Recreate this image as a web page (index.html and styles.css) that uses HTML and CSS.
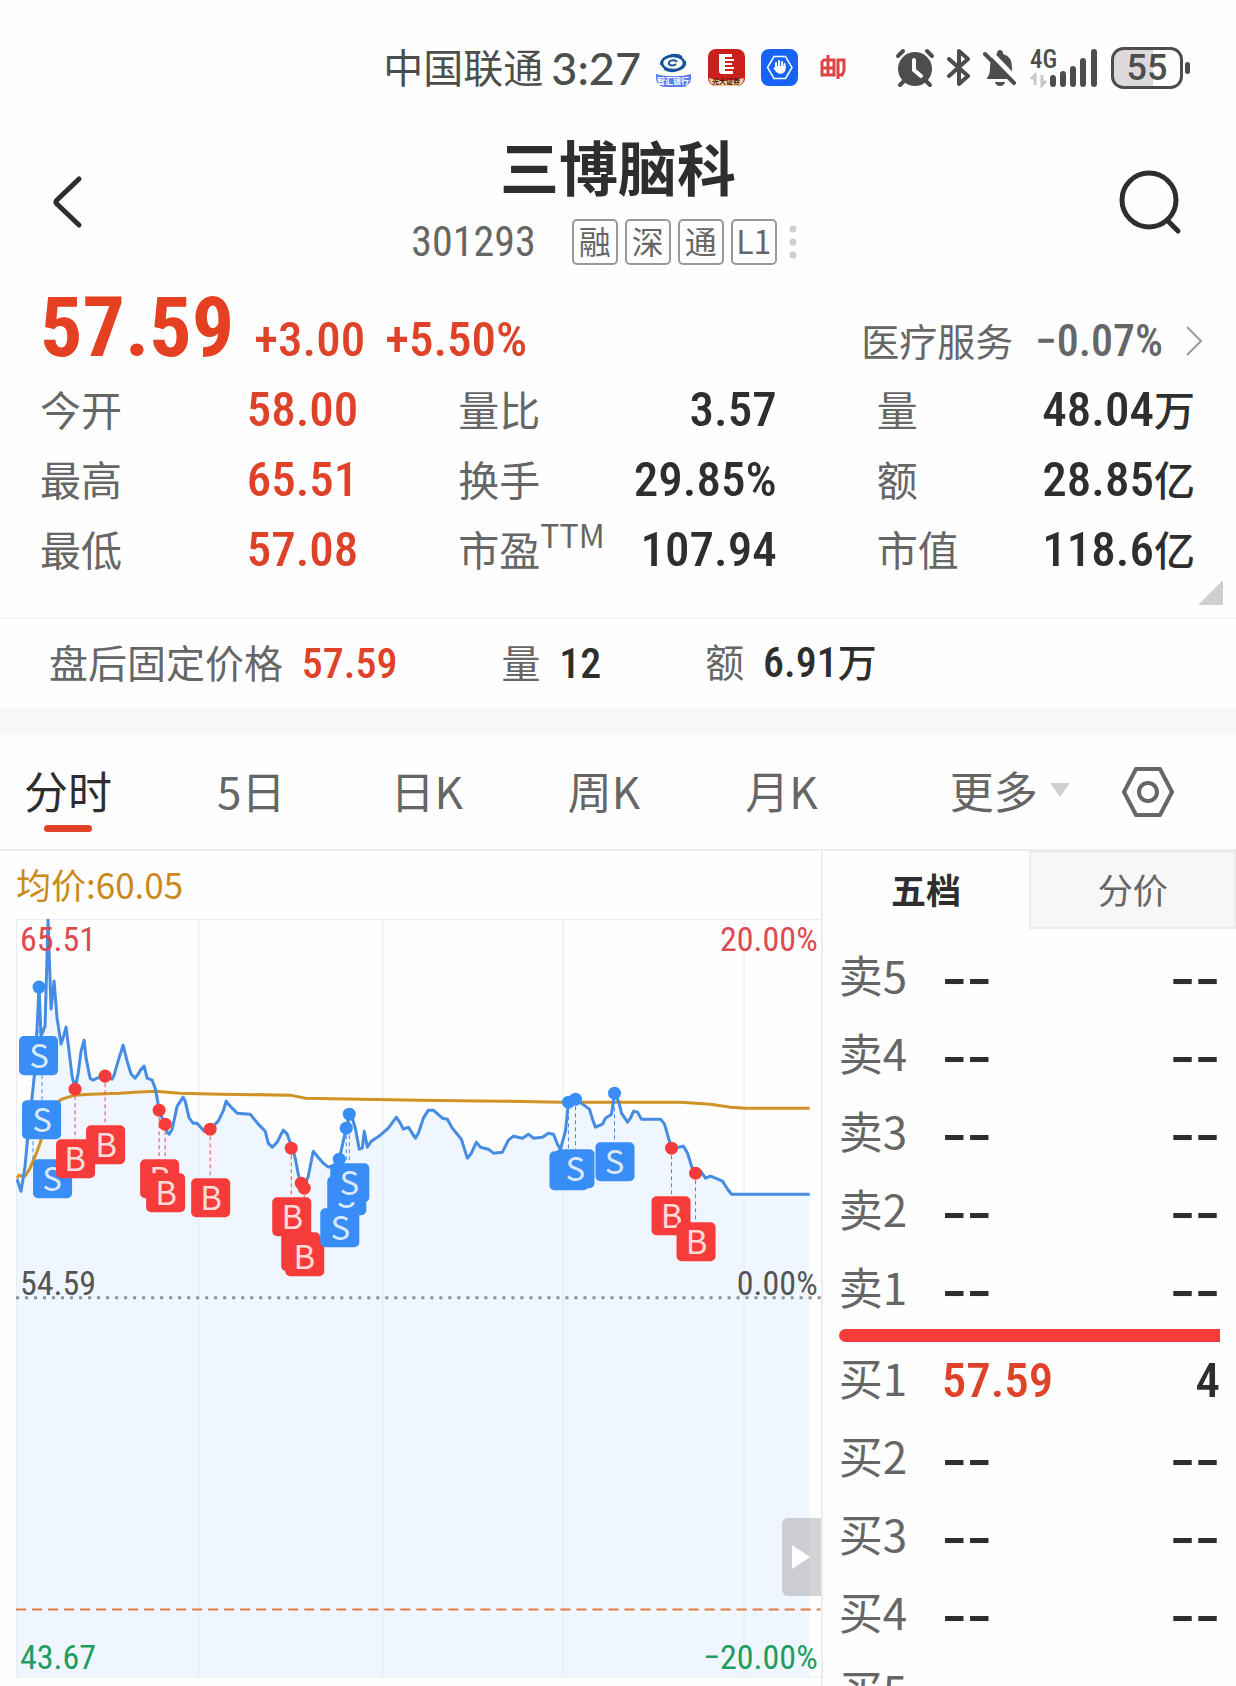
FILE: index.html
```html
<!DOCTYPE html>
<html lang="zh-CN">
<head>
<meta charset="utf-8">
<meta name="viewport" content="width=device-width, initial-scale=1">
<title>三博脑科 301293</title>
<link rel="stylesheet" href="styles.css">
</head>
<body>
<div class="app">
  <div class="status">
    <span class="carrier">中国联通</span>
    <span class="clock">3:27</span>
    <div class="notices">
      <svg width="37" height="38" viewBox="0 0 37 38">
        <ellipse cx="18" cy="14" rx="11" ry="7" fill="none" stroke="#15539c" stroke-width="2.500"/>
        <path d="M6 16C5 8 20 3 27 8M30 12C32 20 18 25 9 20" fill="none" stroke="#15539c" stroke-width="2"/>
        <path d="M22 13c-2-3-9-2-8 2c1 2 5 2 7 0" fill="none" stroke="#15539c" stroke-width="2"/>
        <path d="M1 25c9 3 25 3 35 0c1 8-3 13-9 13H10c-6 0-10-5-9-13z" fill="#5b7cf0"/>
        <text x="18" y="35" class="logo-text" fill="#fff">智汇银行</text>
      </svg>
      <svg width="37" height="38" viewBox="0 0 37 38">
        <rect width="37" height="37" rx="8" fill="#c9201c"/>
        <path d="M1 29q17 5 35 0q-1 8-8 8H9q-7 0-8-8z" fill="#f3cf9a"/>
        <path d="M11 5h13v3h-7v2h9v2h-9v2h7v2h-7v2h9v2h-9v2h8v3H14q-3 0-3-3z" fill="#fff"/>
        <text x="18" y="35" class="logo-text small" fill="#4a1a10">光大证券</text>
      </svg>
      <svg width="37" height="38" viewBox="0 0 37 38">
        <rect width="37" height="37" rx="8" fill="#1763f6"/>
        <path d="M13 7.500h11.500L31 18.500L24.500 29.500H13L6.500 18.500z" fill="none" stroke="#fff" stroke-width="1.500"/>
        <path d="M15 19v-5M18 18v-6M21 18v-5M23.500 19v-4" stroke="#fff" stroke-width="2" stroke-linecap="round"/>
        <path d="M14 17h10.500v3q0 4-5 5q-3 0-5-3l-2-2.500q0-1.500 2-.5z" fill="#fff"/>
      </svg>
      <svg class="mail-logo" width="26" height="38" viewBox="0 0 26 38" fill="none" stroke="#df4444" stroke-width="3">
        <path d="M8 6v20M4 11h10v15H2V13zM2 19h12M18 30V11h6v11l-2 4h-3"/>
      </svg>
    </div>
    <div class="signals">
      <svg width="40" height="40" viewBox="0 0 40 40">
        <circle cx="20" cy="21" r="17" fill="#4c4e4b"/>
        <path d="M3 8l5-5M32 3l5 5M5 37l5-5M30 32l5 5" stroke="#4c4e4b" stroke-width="4" stroke-linecap="round"/>
        <path d="M19 12v10l7 6" fill="none" stroke="#fff" stroke-width="4" stroke-linecap="round"/>
      </svg>
      <svg width="24" height="40" viewBox="0 0 24 40">
        <path d="M2 11l19 17l-9 8V3l9 8L2 28" fill="none" stroke="#4c4e4b" stroke-width="4" stroke-linejoin="round" stroke-linecap="round"/>
      </svg>
      <svg width="34" height="40" viewBox="0 0 34 40">
        <path d="M4 31V30q3-3 3-10q0-12 7-14q0-4 3-4t3 4q9 2 9 14q0 8 3 11z" fill="#4c4e4b"/>
        <path d="M12 34h10q-1 4-5 4t-5-4z" fill="#4c4e4b"/>
        <path d="M5 2l28 29" stroke="#fff" stroke-width="5"/>
        <path d="M2 6l29 29" stroke="#4c4e4b" stroke-width="4" stroke-linecap="round"/>
      </svg>
      <svg width="70" height="40" viewBox="0 0 70 40">
        <text x="1" y="20" class="net">4G</text>
        <path d="M2 31l4-4v10M17 33l-4 4V27" fill="none" stroke="#c8c8c8" stroke-width="3"/>
        <path d="M24 30v6M34 26v10M44 21v15M54 13v23M65 4v32" stroke="#4c4e4b" stroke-width="6" stroke-linecap="round"/>
      </svg>
      <svg width="80" height="42" viewBox="0 0 80 42">
        <path d="M12 2h30v38H12Q2 40 2 30V12Q2 2 12 2z" fill="#dcd8dc"/>
        <rect x="1.500" y="1.500" width="69" height="39" rx="11" fill="none" stroke="#4c4e4b" stroke-width="3"/>
        <rect x="74" y="15" width="5" height="12" rx="2.500" fill="#4c4e4b"/>
        <text x="36" y="33" class="battery">55</text>
      </svg>
    </div>
  </div>

  <header class="header">
    <button class="icon-btn" aria-label="返回">
      <svg width="34" height="54" viewBox="0 0 34 54"><path d="M29 4L7 25q-2 2 0 4L29 50" fill="none" stroke="#2e2e2e" stroke-width="5" stroke-linecap="round"/></svg>
    </button>
    <div class="heading">
      <h1>三博脑科</h1>
      <div class="code-row">
        <span class="code">301293</span>
        <div class="badges">
          <span class="badge">融</span><span class="badge">深</span><span class="badge">通</span><span class="badge">L1</span>
        </div>
        <svg width="8" height="36" viewBox="0 0 8 36" fill="#cfcfcf"><circle cx="4" cy="5" r="3.500"/><circle cx="4" cy="18" r="3.500"/><circle cx="4" cy="31" r="3.500"/></svg>
      </div>
    </div>
    <button class="icon-btn" aria-label="搜索">
      <svg width="64" height="66" viewBox="0 0 64 66" fill="none" stroke="#2e2e2e" stroke-width="5" stroke-linecap="round"><circle cx="31" cy="31" r="27"/><path d="M50 52l10 10"/></svg>
    </button>
  </header>

  <section class="price-row">
    <strong class="price">57.59</strong>
    <span class="change">+3.00</span>
    <span class="change">+5.50%</span>
    <a class="sector" href="#sector">
      <span>医疗服务</span>
      <span class="sector-num">−0.07%</span>
      <svg width="18" height="30" viewBox="0 0 18 30"><path d="M2 1l14 14L2 29" fill="none" stroke="#999" stroke-width="2"/></svg>
    </a>
  </section>

  <section class="quote">
    <dl class="stats">
      <div class="stat up"><dt>今开</dt><dd>58.00</dd></div>
      <div class="stat"><dt>量比</dt><dd>3.57</dd></div>
      <div class="stat"><dt>量</dt><dd>48.04<span class="unit">万</span></dd></div>
      <div class="stat up"><dt>最高</dt><dd>65.51</dd></div>
      <div class="stat"><dt>换手</dt><dd>29.85%</dd></div>
      <div class="stat"><dt>额</dt><dd>28.85<span class="unit">亿</span></dd></div>
      <div class="stat up"><dt>最低</dt><dd>57.08</dd></div>
      <div class="stat"><dt>市盈<sup>TTM</sup></dt><dd>107.94</dd></div>
      <div class="stat"><dt>市值</dt><dd>118.6<span class="unit">亿</span></dd></div>
    </dl>
    <svg class="expand" width="25" height="25" viewBox="0 0 25 25"><path d="M25 0v25H0z" fill="#cfcfcf"/></svg>
  </section>

  <section class="after">
    <span class="after-item">盘后固定价格 <b class="red">57.59</b></span>
    <span class="after-item">量 <b>12</b></span>
    <span class="after-item">额 <b>6.91<span class="unit">万</span></b></span>
  </section>

  <nav class="tabs">
    <div class="tab-list">
      <button class="tab active">分时</button>
      <button class="tab">5日</button>
      <button class="tab">日K</button>
      <button class="tab">周K</button>
      <button class="tab">月K</button>
    </div>
    <button class="tab more">更多<svg width="20" height="14" viewBox="0 0 20 14"><path d="M0 0h20L10 14z" fill="#cfcfcf"/></svg></button>
    <button class="icon-btn" aria-label="设置">
      <svg width="52" height="50" viewBox="0 0 52 50" fill="none" stroke="#666" stroke-width="4"><path d="M14 2h24l12 23l-12 23H14L2 25z" stroke-linejoin="round"/><circle cx="26" cy="25" r="9"/></svg>
    </button>
  </nav>

  <main class="body">
    <section class="chart">
      <div class="avg">均价:60.05</div>
      <div class="plot">
      <svg class="plot-svg" viewBox="0 18 820 758" role="img" aria-label="分时走势">
        <path class="area" d="M17 278L21 290L25 265L28 233L33 187L35 167L39 86L41 135L45 125L48 19L51 108L54 80L57 117L61 143L63 137L66 126L69 150L72 175L75 187L78 173L81 150L84 139L86 157L90 177L93 179L97 177L105 175L112 178L114 174L118 160L123 144L127 160L131 173L135 177L138 173L141 168L144 165L147 177L152 179L155 187L157 197L159 209L162 217L165 223L167 231L169 233L172 228L177 205L183 196L185 200L189 217L193 222L197 222L204 230L210 228L218 220L223 210L226 200L230 205L237 212L250 213L258 223L265 230L268 242L272 246L277 241L281 233L283 229L287 233L292 247L295 257L298 273L301 282L304 287L308 275L313 250L317 255L323 262L328 266L337 263L339 258L343 240L346 227L349 213L352 217L355 227L359 248L362 247L364 230L367 246L371 240L380 234L388 227L396 216L400 222L403 228L408 226L415 237L418 232L423 217L428 209L433 209L442 217L447 218L452 227L461 238L467 257L471 252L476 241L480 246L488 248L493 252L502 251L508 239L513 235L522 237L528 233L533 237L542 236L548 232L553 233L557 243L560 248L565 230L568 201L575 198L582 203L589 208L592 218L595 226L602 223L605 217L611 213L614 192L618 200L621 212L627 221L630 217L633 210L637 211L641 218L660 218L664 223L668 237L671 247L678 246L683 245L687 252L691 265L695 272L700 270L705 277L710 275L722 280L727 288L731 293L740 293L809 293V775H17Z"/>
        <path class="grid" d="M16.500 18.500H820M16.500 18V775.500H820M198.500 18V775M382.500 18V775M562.500 18V775M743.500 18V775"/>
        <path class="zero" d="M16 396.500H820"/>
        <path class="limit" d="M16 708H820"/>
        <path class="average" d="M17 277L19 274L22 275L25 275L30 267L36 253L40 242L44 230L50 212L56 202L62 198L75 194L90 193L120 192L135 191L155 190L180 192L220 193L290 194L305 197L360 198L420 199L500 200L562 201L680 201L710 203L730 206L745 207L809 207"/>
        <path class="line" d="M17 278L21 290L25 265L28 233L33 187L35 167L39 86L41 135L45 125L48 19L51 108L54 80L57 117L61 143L63 137L66 126L69 150L72 175L75 187L78 173L81 150L84 139L86 157L90 177L93 179L97 177L105 175L112 178L114 174L118 160L123 144L127 160L131 173L135 177L138 173L141 168L144 165L147 177L152 179L155 187L157 197L159 209L162 217L165 223L167 231L169 233L172 228L177 205L183 196L185 200L189 217L193 222L197 222L204 230L210 228L218 220L223 210L226 200L230 205L237 212L250 213L258 223L265 230L268 242L272 246L277 241L281 233L283 229L287 233L292 247L295 257L298 273L301 282L304 287L308 275L313 250L317 255L323 262L328 266L337 263L339 258L343 240L346 227L349 213L352 217L355 227L359 248L362 247L364 230L367 246L371 240L380 234L388 227L396 216L400 222L403 228L408 226L415 237L418 232L423 217L428 209L433 209L442 217L447 218L452 227L461 238L467 257L471 252L476 241L480 246L488 248L493 252L502 251L508 239L513 235L522 237L528 233L533 237L542 236L548 232L553 233L557 243L560 248L565 230L568 201L575 198L582 203L589 208L592 218L595 226L602 223L605 217L611 213L614 192L618 200L621 212L627 221L630 217L633 210L637 211L641 218L660 218L664 223L668 237L671 247L678 246L683 245L687 252L691 265L695 272L700 270L705 277L710 275L722 280L727 288L731 293L740 293L809 293"/>
        <path class="stem sell" d="M39 86V135M42 174V200M33 240V260M346 227V275M349 213V262M568 201V250M575 198V248M614 192V241"/>
        <path class="stem buy" d="M75 188V238M105 175V224M159 209V259M165 223V273M210 228V278M291 247V296M304 287V334M671 247V296M695 272V321"/>
        <g class="sell-fill">
          <circle cx="39" cy="86" r="6.500"/><circle cx="339" cy="258" r="6.500"/><circle cx="346" cy="227" r="6.500"/><circle cx="349" cy="213" r="6.500"/><circle cx="568" cy="201" r="6.500"/><circle cx="575" cy="198" r="6.500"/><circle cx="614" cy="192" r="6.500"/>
        </g>
        <g class="buy-fill">
          <circle cx="75" cy="188" r="6.500"/><circle cx="105" cy="175" r="6.500"/><circle cx="159" cy="209" r="6.500"/><circle cx="165" cy="223" r="6.500"/><circle cx="210" cy="228" r="6.500"/><circle cx="291" cy="247" r="6.500"/><circle cx="301" cy="282" r="6.500"/><circle cx="304" cy="287" r="6.500"/><circle cx="671" cy="247" r="6.500"/><circle cx="695" cy="272" r="6.500"/>
        </g>
        <g class="mark">
          <rect class="sell-fill" x="19" y="135" width="39" height="39" rx="5"/><text x="39" y="167">S</text>
          <rect class="sell-fill" x="22" y="199" width="39" height="39" rx="5"/><text x="42" y="231">S</text>
          <rect class="sell-fill" x="33" y="258" width="39" height="39" rx="5"/><text x="52" y="290">S</text>
          <rect class="buy-fill" x="56" y="238" width="39" height="39" rx="5"/><text x="75" y="270">B</text>
          <rect class="buy-fill" x="86" y="224" width="39" height="39" rx="5"/><text x="106" y="256">B</text>
          <rect class="buy-fill" x="140" y="258" width="39" height="39" rx="5"/><text x="160" y="290">B</text>
          <rect class="buy-fill" x="146" y="272" width="39" height="39" rx="5"/><text x="166" y="304">B</text>
          <rect class="buy-fill" x="191" y="277" width="39" height="39" rx="5"/><text x="211" y="309">B</text>
          <rect class="buy-fill" x="272" y="296" width="39" height="39" rx="5"/><text x="292" y="328">B</text>
          <rect class="buy-fill" x="281" y="331" width="39" height="39" rx="5"/>
          <rect class="buy-fill" x="285" y="336" width="39" height="39" rx="5"/><text x="304" y="368">B</text>
          <rect class="sell-fill" x="327" y="275" width="39" height="39" rx="5"/><text x="346" y="307">S</text>
          <rect class="sell-fill" x="330" y="262" width="39" height="39" rx="5"/><text x="349" y="294">S</text>
          <rect class="sell-fill" x="320" y="307" width="39" height="39" rx="5"/><text x="340" y="339">S</text>
          <rect class="sell-fill" x="549" y="250" width="39" height="39" rx="5"/>
          <rect class="sell-fill" x="555" y="248" width="39" height="39" rx="5"/><text x="575" y="280">S</text>
          <rect class="sell-fill" x="595" y="241" width="39" height="39" rx="5"/><text x="614" y="273">S</text>
          <rect class="buy-fill" x="651" y="295" width="39" height="39" rx="5"/><text x="671" y="327">B</text>
          <rect class="buy-fill" x="676" y="321" width="39" height="39" rx="5"/><text x="696" y="353">B</text>
        </g>
        <g class="axis">
          <text x="20" y="50" fill="#dd4a4f">65.51</text><text x="817" y="50" class="end" fill="#dd4a4f">20.00%</text>
          <text x="20" y="394" fill="#555">54.59</text><text x="817" y="394" class="end" fill="#555">0.00%</text>
          <text x="20" y="767" fill="#1f9d5f">43.67</text><text x="817" y="767" class="end" fill="#1f9d5f">−20.00%</text>
        </g>
      </svg>
      <button class="drawer" aria-label="收起">
        <svg width="20" height="26" viewBox="0 0 20 26"><path d="M1 1l18 12L1 25z" fill="#fff"/></svg>
      </button>
      </div>
    </section>

    <aside class="book">
      <div class="book-tabs">
        <button class="book-tab on">五档</button>
        <button class="book-tab">分价</button>
      </div>
      <table class="levels">
        <tr><th scope="row">卖5</th><td class="none">--</td><td class="none qty">--</td></tr>
        <tr><th scope="row">卖4</th><td class="none">--</td><td class="none qty">--</td></tr>
        <tr><th scope="row">卖3</th><td class="none">--</td><td class="none qty">--</td></tr>
        <tr><th scope="row">卖2</th><td class="none">--</td><td class="none qty">--</td></tr>
        <tr><th scope="row">卖1</th><td class="none">--</td><td class="none qty">--</td></tr>
      </table>
      <div class="ratio"></div>
      <table class="levels">
        <tr><th scope="row">买1</th><td class="red">57.59</td><td class="qty">4</td></tr>
        <tr><th scope="row">买2</th><td class="none">--</td><td class="none qty">--</td></tr>
        <tr><th scope="row">买3</th><td class="none">--</td><td class="none qty">--</td></tr>
        <tr><th scope="row">买4</th><td class="none">--</td><td class="none qty">--</td></tr>
        <tr><th scope="row">买5</th><td class="none">--</td><td class="none qty">--</td></tr>
      </table>
    </aside>
  </main>
</div>
</body>
</html>
```
FILE: styles.css
```css
* { box-sizing: border-box; }

body {
  margin: 0;
  background: #fefefe;
  color: #2e2e2e;
  font-family: "Noto Sans CJK SC", sans-serif;
}

button {
  border: 0;
  padding: 0;
  background: none;
  color: inherit;
  font: inherit;
}

svg { display: block; }

.app {
  display: flex;
  flex-direction: column;
  height: 100vh;
  overflow: hidden;
}

.red { color: #de4228; }

/* status bar */
.status {
  display: flex;
  align-items: center;
  justify-content: flex-end;
  height: 108px;
  padding: 28px 45px 0 0;
  margin-bottom: 12px;
  color: #4c4e4b;
  line-height: 44px;
}
.carrier { padding-bottom: 4px; font-size: 40px; }
.clock { margin: 0 14px 0 8px; font-family: Lato, sans-serif; font-size: 45px; font-weight: 500; }
.notices { display: flex; gap: 16px; }
.mail-logo { margin-left: 6px; }
.signals {
  display: flex;
  align-items: center;
  gap: 12px;
  margin-left: 49px;
}
.logo-text { font-size: 8px; font-weight: 700; text-anchor: middle; }
.logo-text.small { font-size: 7px; }
.net { font: 500 25px "Roboto Condensed", Roboto, sans-serif; fill: #4c4e4b; }
.battery { font: 500 36px Roboto, sans-serif; fill: #4c4e4b; text-anchor: middle; }

/* header */
.header {
  display: flex;
  align-items: center;
  justify-content: space-between;
  height: 164px;
  padding: 0 54px 0 50px;
}
.heading {
  display: flex;
  flex-direction: column;
  align-items: center;
  margin-left: 34px;
  padding-bottom: 16px;
}
h1 { margin: 0 0 6px; font-size: 59px; line-height: 90px; }
.code-row { display: flex; align-items: center; height: 50px; margin-right: 28px; }
.code {
  margin-right: 36px;
  color: #666;
  font: 42px/50px "Roboto Condensed", Roboto, sans-serif;
}
.badges { display: flex; gap: 7px; margin-right: 12px; }
.badge {
  width: 46px;
  height: 46px;
  border: 2px solid #999;
  border-radius: 5px;
  color: #666;
  font-size: 32px;
  line-height: 38px;
  text-align: center;
}

/* price */
.price-row {
  display: flex;
  align-items: baseline;
  height: 89px;
  padding: 0 33px 0 40px;
  color: #de4228;
  font-family: "Roboto Condensed", Roboto, "Noto Sans CJK SC", sans-serif;
  font-weight: 500;
  line-height: 88px;
}
.price { margin-right: 20px; color: #e54022; font-size: 84px; font-weight: 700; }
.change { margin-right: 20px; font-size: 49px; }
.sector {
  display: flex;
  align-items: baseline;
  gap: 22px;
  margin-left: auto;
  color: #666;
  font-size: 38px;
  font-weight: 400;
  text-decoration: none;
}
.sector-num { font-size: 44px; font-weight: 500; }

/* quote grid */
.quote { padding: 0 13px 12px 40px; border-bottom: 2px solid #f5f5f5; }
.stats {
  display: grid;
  grid-template-columns: repeat(3, 1fr);
  column-gap: 100px;
  margin: 0;
  padding-right: 28px;
}
.stat {
  display: flex;
  align-items: baseline;
  justify-content: space-between;
  height: 70px;
  line-height: 70px;
}
.stat dt { color: #666; font-size: 41px; white-space: nowrap; }
.stat dd {
  margin: 0;
  font-family: "Roboto Condensed", Roboto, "Noto Sans CJK SC", sans-serif;
  font-size: 49px;
  font-weight: 500;
}
.stat.up dd { color: #de4228; }
.stat sup { font-size: 32px; line-height: 0; vertical-align: 18px; }
.stat .unit { font-size: 41px; }
.expand { margin-left: auto; margin-top: -3px; }

/* after-hours */
.after {
  display: flex;
  align-items: center;
  height: 116px;
  padding: 0 0 4px 49px;
  border-bottom: 26px solid #f7f7f7;
  color: #666;
  font-size: 39px;
  line-height: 60px;
}
.after b {
  margin-left: 10px;
  color: #2e2e2e;
  font-family: "Roboto Condensed", Roboto, "Noto Sans CJK SC", sans-serif;
  font-size: 42px;
  font-weight: 500;
}
.after b.red { color: #de4228; }
.after .unit { font-size: 39px; }
.after-item { margin-right: 104px; }

/* period tabs */
.tabs {
  display: flex;
  align-items: center;
  justify-content: space-between;
  height: 116px;
  padding: 0 62px 0 24px;
  border-bottom: 2px solid #eeebec;
  color: #666;
  font-size: 44px;
}
.tab-list { display: flex; gap: 105px; }
.tab { position: relative; padding-bottom: 4px; line-height: 64px; }
.tab.active { color: #2e2e2e; }
.tab.active::after {
  content: "";
  position: absolute;
  left: 20px;
  right: 20px;
  bottom: -6px;
  height: 7px;
  border-radius: 4px;
  background: #e04228;
}
.more { display: flex; align-items: center; gap: 12px; margin-left: 80px; }

/* chart */
.body { display: flex; flex: 1; min-height: 0; }
.chart { flex: 822; min-width: 0; border-right: 2px solid #eeebec; }
.avg {
  height: 68px;
  padding-left: 16px;
  color: #c98a1b;
  font-size: 35px;
  line-height: 66px;
}
.plot { position: relative; }
.plot-svg { width: 100%; }
.area { fill: #eff6ff; }
.grid { fill: none; stroke: #dfe3ec; stroke-opacity: .7; stroke-width: 1; }
.zero { stroke: #8d9199; stroke-width: 3; stroke-dasharray: 3 6; }
.limit { stroke: #df7d3f; stroke-width: 2; stroke-dasharray: 10 6; }
.average { fill: none; stroke: #cf9224; stroke-width: 3; }
.line { fill: none; stroke: #468ce2; stroke-width: 3; stroke-linejoin: round; }
.stem { fill: none; stroke-width: 1; stroke-dasharray: 4 3; }
.stem.sell { stroke: #468ce2; }
.stem.buy { stroke: #e0505c; }
.sell-fill { fill: #388df6; }
.buy-fill { fill: #f63c3a; }
.mark text { fill: #fff; fill-opacity: .82; font-size: 33px; text-anchor: middle; }
.axis text { font: 34px "Roboto Condensed", Roboto, sans-serif; }
.axis .end { text-anchor: end; }
.drawer {
  position: absolute;
  right: 0;
  top: 79%;
  display: grid;
  place-items: center;
  width: 39px;
  height: 78px;
  border-radius: 6px 0 0 6px;
  background: rgba(150, 145, 145, .4);
}

/* order book */
.book { flex: 414; min-width: 0; }
.book-tabs { display: flex; height: 78px; margin-bottom: 10px; }
.book-tab {
  flex: 1;
  padding-bottom: 4px;
  border: 2px solid #eeebec;
  background: #f7f7f7;
  color: #666;
  font-size: 35px;
}
.book-tab.on { color: #2e2e2e; font-weight: 700; background: none; border-color: transparent; }
.levels { width: 100%; border-collapse: collapse; table-layout: fixed; }
.levels tr { height: 78px; }
.levels th {
  width: 119px;
  padding: 0 0 8px 16px;
  color: #666;
  font-size: 44px;
  font-weight: 400;
  line-height: 60px;
  text-align: left;
}
.levels td {
  padding: 0;
  font: 500 49px/60px "Roboto Condensed", Roboto, sans-serif;
}
.levels td.none { padding-bottom: 14px; font: 72px/60px "Noto Sans CJK SC", sans-serif; }
.levels .qty { padding-right: 16px; text-align: right; }
.ratio {
  height: 13px;
  margin: 0 16px;
  border-radius: 7px 0 0 7px;
  background: #f63c3a;
}
```
